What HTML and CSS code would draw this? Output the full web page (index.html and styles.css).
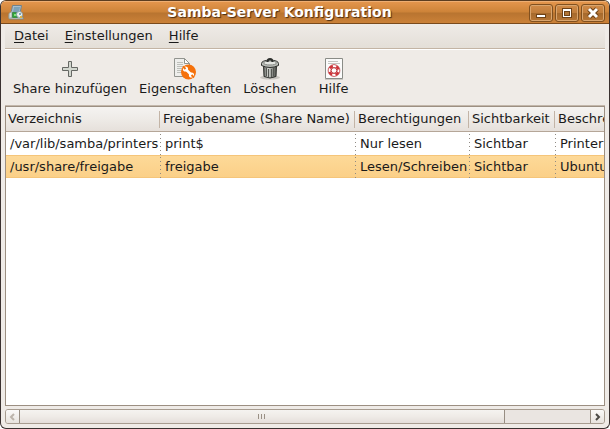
FILE: index.html
```
<!DOCTYPE html>
<html lang="de">
<head>
  <meta charset="UTF-8">
  <meta name="viewport" content="width=device-width, initial-scale=1.0">
  <title>Samba-Server Konfiguration</title>
  <link rel="stylesheet" href="styles.css">
</head>
<body>
  <div class="window">

    <!-- Title Bar -->
    <header class="titlebar">
      <svg class="app-icon" width="16" height="16" viewBox="0 0 16 16">
        <path d="M4.500 .5h9l-1.500 8h-9z" fill="#a9bfcd" stroke="#71828b"/>
        <path d="M6 2h6l-1 5H5z" fill="#7da2b7"/>
        <path d="M1 10.500h13l1.500 3.500H1.500z" fill="#dde2de" stroke="#7d8986"/>
        <path d="M1 8.500l3-2v6l-3 1z" fill="#d8dedd" stroke="#9aa5a1"/>
        <path d="M4.500 7.500h4l1 5h-5z" fill="#2fa63b" stroke="#3f8a4a"/>
        <path d="M6 9h2v2H6z" fill="#86dc7c"/>
        <circle cx="11.500" cy="9.500" r="3" fill="#edf2ef" stroke="#89a2ac"/>
        <path d="M11 8h2v2h-2z" fill="#7fa7c0"/>
        <path d="M12 11h2v2h-2z" fill="#dfb344"/>
      </svg>
      <h1>Samba-Server Konfiguration</h1>
      <div class="window-buttons">
        <button type="button" aria-label="Minimieren">
          <svg width="14" height="12" viewBox="0 0 14 12" shape-rendering="crispEdges">
            <path d="M2 7h10v4H2z" fill="#6e4217"/>
            <path d="M3 8h8v2H3z" fill="#fff"/>
          </svg>
        </button>
        <button type="button" aria-label="Maximieren">
          <svg width="14" height="12" viewBox="0 0 14 12" shape-rendering="crispEdges">
            <path d="M2 1h10v10H2z" fill="#6e4217"/>
            <path d="M3 2h8v8H3z" fill="#fff"/>
            <path d="M4 4h6v5H4z" fill="#6e4217"/>
            <path d="M5 5h4v3H5z" fill="#b27535"/>
          </svg>
        </button>
        <button type="button" aria-label="Schließen">
          <svg width="14" height="12" viewBox="0 0 14 12">
            <path d="M3 2l8 8M11 2l-8 8" stroke="#6e4217" stroke-width="5"/>
            <path d="M3 2l8 8M11 2l-8 8" stroke="#fff" stroke-width="3"/>
          </svg>
        </button>
      </div>
    </header>

    <div class="content">

      <!-- Menu -->
      <nav class="menubar">
        <button type="button"><u>D</u>atei</button>
        <button type="button"><u>E</u>instellungen</button>
        <button type="button"><u>H</u>ilfe</button>
      </nav>

      <!-- Toolbar -->
      <div class="toolbar">
        <button type="button">
          <svg width="24" height="24" viewBox="0 0 24 24">
            <path d="M10.500 4.500h3v6h6v3h-6v6h-3v-6h-6v-3h6z" fill="#d3d7cf" stroke="#666864"/>
          </svg>
          Share hinzufügen
        </button>
        <button type="button">
          <svg width="24" height="24" viewBox="0 0 24 24">
            <path d="M1.500 1.500h10l5 5v13h-15z" fill="#eeeeec" stroke="#92948f"/>
            <path d="M11.500 1.500v5h5z" fill="#fff" stroke="#92948f"/>
            <path d="M4 5.500h6M4 7.500h6M4 9.500h9M4 11.500h6M4 13.500h5M4 15.500h5" stroke="#bdbfba"/>
            <circle cx="15.500" cy="15" r="7.500" fill="#f5710b"/>
            <path d="M12.500 12l6 6" stroke="#fff" stroke-width="2.500"/>
            <circle cx="12.500" cy="12" r="2.600" fill="#fff"/>
            <circle cx="18.500" cy="18" r="2.600" fill="#fff"/>
            <path d="M10 9.500l2.500 2.500M18.500 18l2.500 2.500" stroke="#f5710b" stroke-width="2"/>
          </svg>
          Eigenschaften
        </button>
        <button type="button">
          <svg width="24" height="24" viewBox="0 0 24 24">
            <defs>
              <linearGradient id="metal">
                <stop offset="0" stop-color="#555753"/>
                <stop offset=".35" stop-color="#d5d7d2"/>
                <stop offset="1" stop-color="#4a4c48"/>
              </linearGradient>
            </defs>
            <ellipse cx="12" cy="20.500" rx="10" ry="2" fill="#c9c6c1"/>
            <path d="M5.500 9h13l-.5 10.500q-6 3-12 0z" fill="url(#metal)" stroke="#30322f"/>
            <path d="M8.500 11v8M10.500 12v8M13.500 12v8M15.500 11v8" stroke="#555753"/>
            <path d="M3.500 6.500q0-3 8.500-3.500 8.500.5 8.500 3.500v2q-8.500 4-17 0z" fill="#b9bcb7" stroke="#2e302d"/>
            <ellipse cx="12" cy="6" rx="6.500" ry="2" fill="#e4e6e2" stroke="#878985"/>
            <path d="M9.500 5q0-3 2.500-3t2.500 3" fill="none" stroke="#2e302d" stroke-width="2"/>
          </svg>
          Löschen
        </button>
        <button type="button">
          <svg width="24" height="24" viewBox="0 0 24 24">
            <path d="M3 22.500h18" stroke="#cbc8c3"/>
            <path d="M3.500 1.500h17v20h-17z" fill="#fbfbfb" stroke="#8a8c87"/>
            <path d="M6 4.500h10M6 6.500h12" stroke="#c4c5c2"/>
            <circle cx="12" cy="13.500" r="4.500" fill="none" stroke="#d0333a" stroke-width="3"/>
            <circle cx="12" cy="13.500" r="4.500" fill="none" stroke="#fff" stroke-width="2" stroke-dasharray="3.500 3.570" stroke-dashoffset="1.750"/>
            <circle cx="12" cy="13.500" r="6" fill="none" stroke="#bd5559" stroke-width=".6"/>
            <circle cx="12" cy="13.500" r="2.800" fill="#fff" stroke="#b9373c"/>
          </svg>
          Hilfe
        </button>
      </div>

      <!-- Share List -->
      <div class="share-list">
        <table>
          <colgroup>
            <col class="col-path">
            <col class="col-name">
            <col class="col-rights">
            <col class="col-visible">
            <col class="col-comment">
          </colgroup>
          <thead>
            <tr>
              <th>Verzeichnis</th>
              <th>Freigabename (Share Name)</th>
              <th>Berechtigungen</th>
              <th>Sichtbarkeit</th>
              <th>Beschreibung</th>
            </tr>
          </thead>
          <tbody>
            <tr>
              <td>/var/lib/samba/printers</td>
              <td>print$</td>
              <td>Nur lesen</td>
              <td>Sichtbar</td>
              <td>Printer</td>
            </tr>
            <tr class="selected">
              <td>/usr/share/freigabe</td>
              <td>freigabe</td>
              <td>Lesen/Schreiben</td>
              <td>Sichtbar</td>
              <td>Ubuntu</td>
            </tr>
          </tbody>
        </table>
      </div>

      <!-- Scrollbar -->
      <div class="scrollbar">
        <button type="button" class="left" aria-label="Nach links">
          <svg width="7" height="8" viewBox="0 0 7 8">
            <path d="M5 1L2 4l3 3" fill="none" stroke="#bcb4ab" stroke-width="2"/>
          </svg>
        </button>
        <div class="track">
          <div class="thumb"><i></i><i></i><i></i></div>
        </div>
        <button type="button" class="right" aria-label="Nach rechts">
          <svg width="7" height="8" viewBox="0 0 7 8">
            <path d="M2 1l3 3-3 3" fill="none" stroke="#4c4a45" stroke-width="2"/>
          </svg>
        </button>
      </div>
    </div>
  </div>
</body>
</html>
```

FILE: styles.css
```
/* General Styles */
* {
  box-sizing: border-box;
}

body {
  margin: 0;
  background: #fff;
  color: #1a1a1a;
  font-family: 'DejaVu Sans', sans-serif;
  font-size: 13px;
  line-height: 16px;
}

button {
  margin: 0;
  padding: 0;
  border: none;
  background: none;
  color: inherit;
  font: inherit;
}

svg {
  display: block;
}

.window {
  display: flex;
  flex-direction: column;
  height: 100vh;
  border: 1px solid #3a3130;
  border-top-color: #5c3d20;
  border-radius: 6px;
  background: #efebe7;
  overflow: hidden;
}

/* Title Bar */
.titlebar {
  display: flex;
  align-items: center;
  height: 23px;
  flex: none;
  padding: 0 4px 0 7px;
  border-top: 1px solid #eeae72;
  border-bottom: 1px solid #7a4a1c;
  background: linear-gradient(#e3954c, #cd8338 48%, #b87430 52%, #cb8138);
}

.titlebar h1 {
  flex: 1;
  margin: 0;
  padding: 0 0 2px 6px;
  color: #fff;
  font-size: 14px;
  font-weight: bold;
  text-align: center;
  text-shadow: 1px 1px 1px #4a2c10;
}

.window-buttons {
  display: flex;
  gap: 2px;
}

.window-buttons button {
  display: flex;
  align-items: center;
  justify-content: center;
  width: 24px;
  height: 18px;
  border: 1px solid #81501f;
  border-radius: 3px;
  background: linear-gradient(#d18b48, #c07d3b 48%, #a66a2d 52%, #b87634);
  box-shadow: inset 0 0 0 1px #d9a56e;
}

/* Window Content */
.content {
  display: flex;
  flex-direction: column;
  flex: 1;
  min-height: 0;
  padding: 0 4px 4px;
}

/* Menu */
.menubar {
  display: flex;
  flex: none;
  height: 26px;
  padding: 0 1px 2px;
  border-bottom: 1px solid #fff;
  background: linear-gradient(#efebe7, #e3ded7);
  box-shadow: inset 0 -1px #c3b4a4;
}

.menubar button {
  padding: 0 8px;
}

.menubar u {
  text-underline-offset: 2px;
}

/* Toolbar */
.toolbar {
  display: flex;
  flex: none;
  padding: 7px 2px 9px;
}

.toolbar button {
  display: flex;
  flex-direction: column;
  align-items: center;
  min-width: 62px;
  padding: 0 6px;
}

/* Share List */
.share-list {
  flex: 1;
  min-height: 0;
  border: 1px solid #9c8f82;
  box-shadow: 0 -1px #c3b7ab;
  background: #fff;
  overflow: hidden;
}

table {
  width: 650px;
  border-collapse: separate;
  border-spacing: 0;
  table-layout: fixed;
}

.col-path {
  width: 155px;
}

.col-name {
  width: 195px;
}

.col-rights {
  width: 114px;
}

.col-visible {
  width: 86px;
}

th {
  height: 25px;
  padding: 0 2px;
  border-bottom: 1px solid #b5a698;
  background:
    linear-gradient(#c3b4a6, #c3b4a6) right 1px center / 1px 17px no-repeat,
    linear-gradient(#f5f3f1, #eeebe7 50%, #e6e0db);
  font-weight: normal;
  text-align: left;
  white-space: nowrap;
}

td {
  height: 23px;
  padding: 0 4px;
  background: repeating-linear-gradient(transparent 0 2px, #8f8a83 2px 3px, transparent 3px 4px) right / 1px 100% no-repeat;
  white-space: nowrap;
}

td:last-child {
  background: none;
}

.selected {
  background: linear-gradient(#f5c57a 0 1px, #fdd998 1px, #fbd088 22px, #f5c57a 22px);
}

/* Scrollbar */
.scrollbar {
  display: flex;
  flex: none;
  height: 15px;
  margin-top: 3px;
  border: 1px solid #a79c90;
  border-radius: 3px;
  background: #eae5e1;
  overflow: hidden;
}

.scrollbar button {
  display: flex;
  align-items: center;
  justify-content: center;
  width: 14px;
  background: linear-gradient(#fbfaf9, #e8e3de);
}

.scrollbar .left {
  border-right: 1px solid #978d82;
}

.scrollbar .right {
  border-left: 1px solid #978d82;
}

.track {
  flex: 1;
}

.thumb {
  display: flex;
  align-items: center;
  justify-content: center;
  gap: 2px;
  width: 85%;
  height: 100%;
  border-right: 1px solid #978d82;
  background: linear-gradient(#f5f3f0, #efebe7 50%, #e4deda);
}

.thumb i {
  width: 1px;
  height: 5px;
  background: #9a9085;
}
```
